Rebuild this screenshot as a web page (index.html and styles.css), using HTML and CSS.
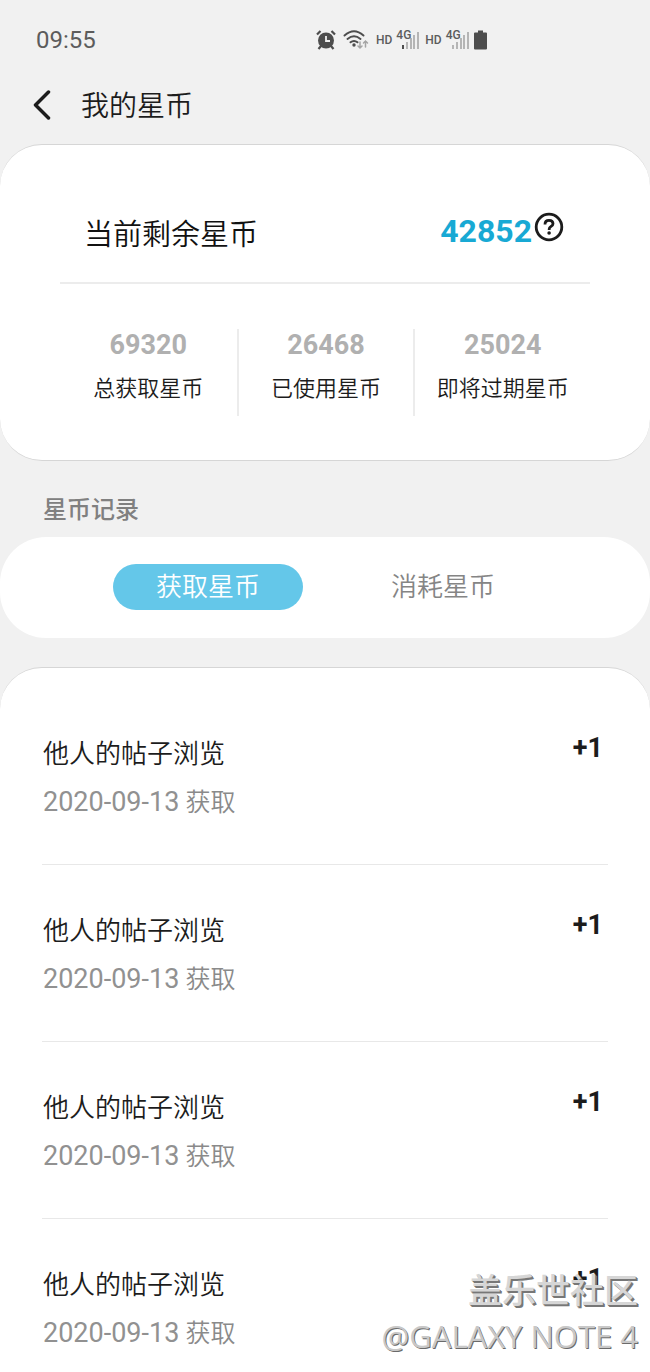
FILE: index.html
```html
<!DOCTYPE html>
<html lang="zh-CN">
<head>
<meta charset="utf-8">
<meta name="viewport" content="width=device-width, initial-scale=1">
<title>我的星币</title>
<link rel="stylesheet" href="styles.css">
</head>
<body>
<div class="app">
  <div class="status">
    <time class="clock">09:55</time>
    <div class="indicators">
      <svg class="alarm" width="20" height="20" viewBox="0 0 20 20" fill="none" stroke="#4d4d4d">
        <circle cx="10" cy="10.5" r="8" fill="#4d4d4d" stroke="none"/>
        <path d="M1 4.500 4.500 1M19 4.500 15.500 1M5 16l-2.500 3M15 16l2.500 3" stroke-width="2.200"/>
        <path d="M10 6v5h4" stroke="#f1f1f1" stroke-width="1.800"/>
      </svg>
      <svg class="wifi" width="26" height="20" viewBox="0 0 26 20" fill="none" stroke="#4d4d4d" stroke-width="1.900" stroke-linecap="round">
        <path d="M1.500 5.500Q11-3 20.500 5.500M4.500 9Q11 3.500 17.500 9M7.500 12.300Q11 9.500 14.500 12.300"/>
        <circle cx="11" cy="15" r="1.700" fill="#4d4d4d" stroke="none"/>
        <path d="M17 12v6M15 16l2 2 2-2M22.500 17v-6M20.500 13l2-2 2 2" stroke="#a5a5a5" stroke-width="1.500"/>
      </svg>
      <span class="hd">HD</span>
      <span class="signal">
        <svg width="22" height="20" viewBox="0 0 22 20" fill="#b5b5b5"><path fill="#4d4d4d" d="M5 15h2v4H5z"/><path d="M9 12h2v7H9zM13 8h2v11h-2zM16 5h2v14h-2zM20 2h2v17h-2z"/></svg>
        <span class="net">4G</span>
      </span>
      <span class="hd">HD</span>
      <span class="signal">
        <svg width="22" height="20" viewBox="0 0 22 20" fill="#b5b5b5"><path d="M5 15h2v4H5zM9 12h2v7H9zM13 8h2v11h-2zM16 5h2v14h-2zM20 2h2v17h-2z"/></svg>
        <span class="net">4G</span>
      </span>
      <svg class="battery" width="13" height="20" viewBox="0 0 13 20" fill="#4d4d4d"><path d="M4 .5h5v2h3q1 0 1 1V18.500q0 1-1 1H1q-1 0-1-1V3.500q0-1 1-1h3z"/></svg>
    </div>
  </div>

  <header class="header">
    <button class="icon-button" type="button" aria-label="返回">
      <svg width="18" height="30" viewBox="0 0 18 30" fill="none" stroke="#1c1c1c" stroke-width="3.500" stroke-linecap="round" stroke-linejoin="round"><path d="M15.500 2 2.500 15l13 13"/></svg>
    </button>
    <h1 class="title">我的星币</h1>
  </header>

  <section class="card summary">
    <div class="balance">
      <h2 class="balance-label">当前剩余星币</h2>
      <div class="balance-value">
        <strong class="amount">42852</strong>
        <button class="icon-button" type="button" aria-label="说明">
          <svg width="30" height="30" viewBox="0 0 30 30" fill="none" stroke="#1c1c1c" stroke-width="2.800"><circle cx="15" cy="15" r="12.800"/><path d="M11 12.400q0-4 4-4t4 3.400c0 2.700-3.800 2.600-3.800 5.200v1"/><circle cx="15.100" cy="21" r="1.800" fill="#1c1c1c" stroke="none"/></svg>
        </button>
      </div>
    </div>
    <dl class="stats">
      <div class="stat"><dt>总获取星币</dt><dd>69320</dd></div>
      <div class="stat"><dt>已使用星币</dt><dd>26468</dd></div>
      <div class="stat"><dt>即将过期星币</dt><dd>25024</dd></div>
    </dl>
  </section>

  <h2 class="section-title">星币记录</h2>
  <nav class="tabs">
    <button class="tab active" type="button">获取星币</button>
    <button class="tab" type="button">消耗星币</button>
  </nav>

  <ul class="card records">
    <li class="record"><div><p class="name">他人的帖子浏览</p><p class="date"><time class="day">2020-09-13</time> 获取</p></div><strong class="delta">+1</strong></li>
    <li class="record"><div><p class="name">他人的帖子浏览</p><p class="date"><time class="day">2020-09-13</time> 获取</p></div><strong class="delta">+1</strong></li>
    <li class="record"><div><p class="name">他人的帖子浏览</p><p class="date"><time class="day">2020-09-13</time> 获取</p></div><strong class="delta">+1</strong></li>
    <li class="record"><div><p class="name">他人的帖子浏览</p><p class="date"><time class="day">2020-09-13</time> 获取</p></div><strong class="delta">+1</strong></li>
  </ul>
  <div class="watermark">
    <span class="community">盖乐世社区</span>
    <span class="user">@GALAXY NOTE 4</span>
  </div>
</div>
</body>
</html>
```
FILE: styles.css
```css
* { box-sizing: border-box; margin: 0; padding: 0; }

body {
  background: #f1f1f1;
  color: #1c1c1c;
  font-family: Roboto, "Noto Sans CJK SC", sans-serif;
}

button { border: 0; background: none; font: inherit; color: inherit; cursor: pointer; }
svg { display: block; }

.app {
  position: relative;
  display: flex;
  flex-direction: column;
  height: 100vh;
  overflow: hidden;
}

.status {
  display: grid;
  grid-template-columns: 280px 1fr;
  align-items: center;
  padding: 24px 36px 0;
  line-height: 32px;
}
.clock { font-size: 24px; color: #5c5c5c; }
.indicators { display: flex; align-items: center; gap: 7px; height: 30px; color: #5c5c5c; }
.hd { font-size: 12px; font-weight: 500; }
.signal { position: relative; margin-left: -2px; }
.signal + .hd { margin-left: -1px; }
.battery { margin-left: -2px; }
.net {
  position: absolute;
  top: -2px;
  left: -1px;
  font-size: 12px;
  font-weight: 500;
  line-height: 14px;
}

.header { display: flex; align-items: center; gap: 30px; padding: 25px 33px 15px; }
.title { padding-top: 3px; font-size: 28px; font-weight: 350; line-height: 45px; }

.card { background: #fff; border: 1px solid #d6d6d6; border-width: 1px 0; }

.summary { border-radius: 42px; padding: 48px 60px 44px; }
.balance {
  display: flex;
  justify-content: space-between;
  align-items: center;
  padding: 16px 26px 23px 24px;
  border-bottom: 2px solid #ececec;
}
.balance-label { padding-top: 2px; font-size: 29px; font-weight: 350; line-height: 48px; color: #111; }
.balance-value { display: flex; align-items: flex-start; gap: 2px; }
.amount { font-size: 32px; line-height: 38px; padding-bottom: 6px; color: #18a9d4; }

.stats { display: grid; grid-template-columns: repeat(3, 1fr); padding-top: 45px; }
.stat {
  display: flex;
  flex-direction: column-reverse;
  gap: 12px;
  padding-bottom: 11px;
  text-align: center;
}
.stat + .stat { border-left: 2px solid #ececec; }
.stat dt { font-size: 22px; font-weight: 350; line-height: 32px; }
.stat dd { font-size: 27px; font-weight: 700; line-height: 32px; color: #b0b0b0; }

.section-title {
  padding: 29px 43px 7px;
  font-size: 24px;
  font-weight: 500;
  line-height: 40px;
  color: #808080;
}

.tabs {
  display: grid;
  grid-template-columns: 1fr 1fr;
  gap: 45px;
  padding: 27px 112px 28px 113px;
  border-radius: 46px;
  background: #fff;
}
.tab { border-radius: 24px; font-size: 26px; font-weight: 350; line-height: 46px; color: #858585; }
.tab.active { background: #64c7e9; color: #fff; }

.records {
  flex: 1;
  min-height: 0;
  margin-top: 29px;
  padding: 20px 42px 0;
  border-bottom: 0;
  border-radius: 42px 42px 0 0;
  list-style: none;
}
.record {
  display: flex;
  justify-content: space-between;
  padding: 42px 5px 37px 1px;
  border-bottom: 1px solid #e8e8e8;
}
.name { font-size: 26px; font-weight: 350; line-height: 48px; }
.date { font-size: 25px; font-weight: 350; line-height: 48px; color: #8a8a8a; }
.day { font-size: 27px; font-weight: 400; color: #919191; }
.delta { font-size: 27px; line-height: 36px; }

.watermark {
  position: absolute;
  right: 12px;
  bottom: 14px;
  display: flex;
  flex-direction: column;
  align-items: flex-end;
  color: #d6d6d6;
  text-shadow: 1px 1px 0 #777, 2px 2px 0 #777;
}
.community { font-size: 34px; font-weight: 500; line-height: 46px; }
.user {
  font-family: "Open Sans", sans-serif;
  font-size: 31px;
  line-height: 44px;
  color: #c8c8c8;
  text-shadow: 1px 1px 0 #6a6a6a;
}
```
